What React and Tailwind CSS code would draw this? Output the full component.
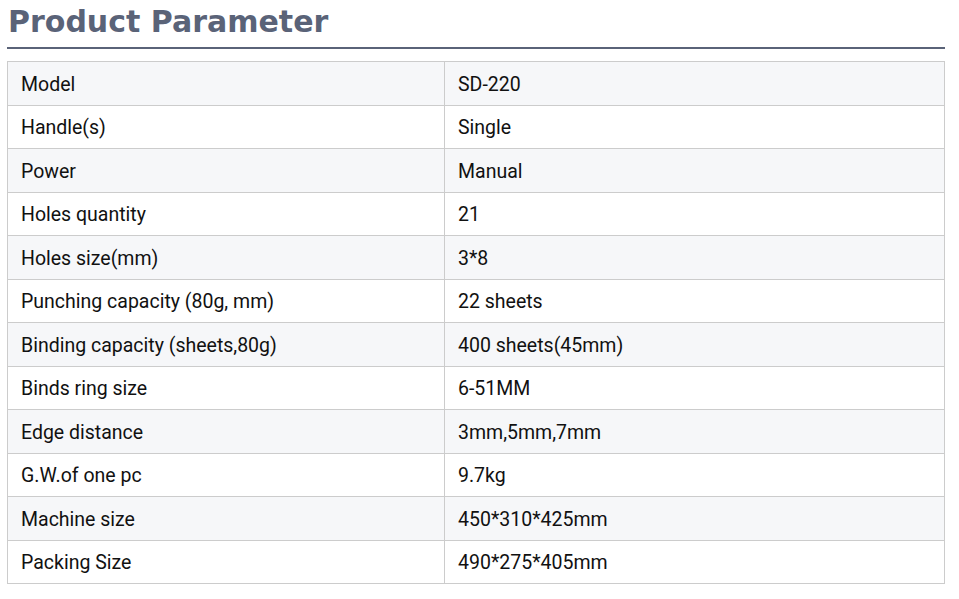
import React from "react";

const rows = [
  ["Model", "SD-220"],
  ["Handle(s)", "Single"],
  ["Power", "Manual"],
  ["Holes quantity", "21"],
  ["Holes size(mm)", "3*8"],
  ["Punching capacity (80g, mm)", "22 sheets"],
  ["Binding capacity (sheets,80g)", "400 sheets(45mm)"],
  ["Binds ring size", "6-51MM"],
  ["Edge distance", "3mm,5mm,7mm"],
  ["G.W.of one pc", "9.7kg"],
  ["Machine size", "450*310*425mm"],
  ["Packing Size", "490*275*405mm"],
];

const App = () => {
  return (
    <div className="bg-white w-[959px] h-[599px] px-[7px] pt-[2px]">
      {/* Title */}
      <h2 className="font-['DejaVu_Sans',sans-serif] font-bold text-[30px] leading-[40px] text-[#5a6378] pl-[1px] border-b-2 border-[#5a6378] pb-[5px] w-[938px]">
        Product Parameter
      </h2>

      {/* Parameter table */}
      <table className="mt-[12px] w-[938px] border-collapse font-['Roboto',sans-serif] text-[19.5px] text-[#111]">
        <tbody>
          {rows.map(([label, value], i) => (
            <tr key={label} className={i % 2 === 0 ? "bg-[#f6f7f9]" : "bg-white"}>
              <td className="w-[437px] h-[43.5px] border border-[#cccccc] px-[13px] pt-[2px] align-middle">
                {label}
              </td>
              <td className="h-[43.5px] border border-[#cccccc] px-[13px] pt-[2px] align-middle">
                {value}
              </td>
            </tr>
          ))}
        </tbody>
      </table>
    </div>
  );
};

export default App;
